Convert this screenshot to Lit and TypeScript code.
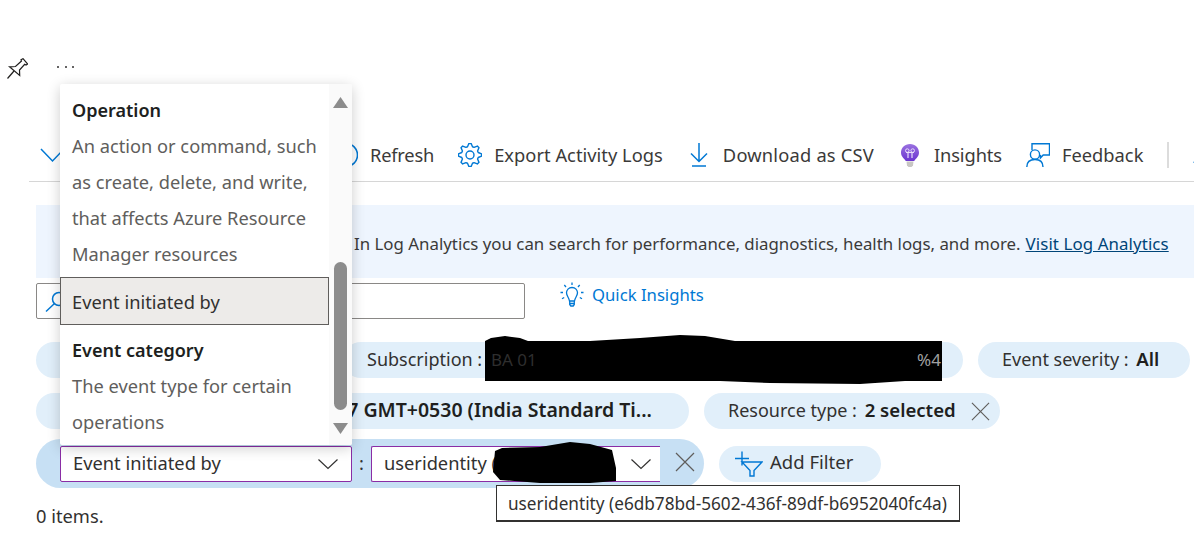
import { LitElement, html, css, svg } from "lit";
import { customElement } from "lit/decorators.js";

function gearPath(cx: number, cy: number, ro: number, ri: number, teeth: number) {
  const pts: string[] = [];
  const n = teeth * 4;
  for (let i = 0; i < n; i++) {
    const phase = i % 4;
    const r = phase === 0 || phase === 1 ? ro : ri;
    const a = ((i + 0.5) / n) * Math.PI * 2 - Math.PI / 2 - (Math.PI * 2) / n;
    pts.push(`${(cx + r * Math.cos(a)).toFixed(2)} ${(cy + r * Math.sin(a)).toFixed(2)}`);
  }
  return "M" + pts.join("L") + "Z";
}

const X = (size: number) => html`<svg width=${size} height=${size} viewBox="0 0 20 20" fill="none" stroke="#605e5c" stroke-width="1.2" style="flex:none;display:block"><path d="M1 1L19 19M19 1L1 19"/></svg>`;
const CHEV = html`<svg width="22" height="12" viewBox="0 0 22 12" fill="none" stroke="#323130" stroke-width="1.2" style="flex:none"><path d="M1.5 1.5L11 10.5L20.5 1.5"/></svg>`;

@customElement("app-root")
export class AppRoot extends LitElement {
  static styles = css`
    :host { display: block; width: 1194px; height: 533px; font-family: "Noto Sans", "Open Sans", sans-serif; color: #323130; background: #fff; font-size: 18.3px; }
    * { box-sizing: border-box; }
    .page { position: relative; width: 1194px; height: 533px; overflow: hidden; }
    .head { display: flex; align-items: center; height: 24px; padding: 56px 0 0 7px; box-sizing: content-box; gap: 29px; }
    .dots { display: flex; gap: 5.7px; margin-top: -3px; }
    .dots i { width: 2px; height: 2px; background: #323130; border-radius: 50%; }
    .toolbar { display: flex; align-items: center; margin: 50px 0 0 29px; padding: 0 0 2px 11px; height: 52px; border-bottom: 1px solid #d6d6d6; gap: 24px; white-space: nowrap; overflow: hidden; }
    .tool { display: flex; align-items: center; gap: 12px; color: #3b3a39; }
    .tool svg { flex: none; display: block; }
    .chev { margin-right: 246px; }
    .t-refresh { letter-spacing: -.2px; }
    .t-export { letter-spacing: .03px; }
    .t-csv { letter-spacing: .2px; }
    .t-ins { letter-spacing: -.1px; }
    .sep { width: 2px; height: 26px; background: #dcdcdc; flex: none; }
    .banner { display: flex; align-items: center; margin: 23px 0 0 36px; height: 73px; padding: 4px 0 0 318px; background: #eef5fe; color: #3b3a39; white-space: nowrap; font-size: 16.85px; }
    .banner a { color: #004578; text-decoration: underline; margin-left: 5px; letter-spacing: .1px; }
    .search-row { display: flex; align-items: flex-start; gap: 35px; margin: 5px 0 0 36px; }
    .search { width: 489px; height: 36px; border: 1px solid #8a8886; border-radius: 2px; padding: 7px 0 0 8px; background: #fff; }
    .qi { display: flex; align-items: center; gap: 8px; color: #0078d4; height: 24px; font-size: 16.7px; }
    .qi span { margin-top: -2px; }
    .row { display: flex; gap: 15px; margin: 15px 0 0 36px; white-space: nowrap; align-items: center; }
    .row.first { margin-top: 23px; }
    .pill { display: flex; align-items: center; height: 36px; border-radius: 18px; background: #e1effa; padding: 0 24px; flex: none; color: #323130; gap: 15px; font-size: 18px; }
    .pill > span { margin-top: -3px; }
    .pill b { font-weight: 600; color: #201f1e; font-size: 18.6px; margin-left: 3px; }
    .w1 { width: 292px; }
    .w2 { width: 620px; }
    .w3 { width: 212px; }
    .w4 { width: 653px; justify-content: flex-end; padding-right: 37px; }
    .w4 b { font-size: 19.5px; margin-left: 0; }
    .res { padding-right: 10px; }
    .edit { height: 49px; width: 668px; border-radius: 25px; background: #c7e0f4; padding: 0 9px 0 24px; gap: 0; justify-content: flex-start; font-size: 18.3px; }
    .row.third { margin-top: 10px; }
    .sel { display: flex; align-items: center; justify-content: space-between; height: 36px; border: 1px solid #8a2da5; background: #fff; border-radius: 2px; padding: 0 12px; flex: none; }
    .sel > span { margin-top: -3px; }
    .sel.a { width: 292px; }
    .sel.b { width: 289px; border-right: 0; border-radius: 2px 0 0 2px; padding-right: 8px; }
    .colon { width: 19px; text-align: center; flex: none; }
    .sel-x { margin-left: 15px; display: block; flex: none; }
    .add { width: 162px; padding: 0 0 0 16px; gap: 7px; font-size: 18.5px; }
    .add > span { margin-top: -5px; }
    .count { margin: 15px 0 0 36px; line-height: 26px; color: #323130; }
    .menu { position: absolute; left: 60px; top: 84px; width: 292px; height: 361px; background: #fff; border-radius: 2px; box-shadow: 0 3px 14px rgba(0,0,0,.2); display: flex; padding-top: 8px; overflow: hidden; font-size: 18.25px; }
    .list { width: 269px; flex: none; }
    .opt { padding: 0 8px 0 12px; line-height: 36px; }
    .opt b { display: block; font-weight: 600; color: #201f1e; font-size: 18.05px; }
    .opt span { display: block; color: #605e5c; }
    .opt.sel-opt { height: 48px; margin: 5px 0 7px; padding: 0 11px; border: 1px solid #605e5c; background: #edebe9; line-height: 48px; color: #323130; font-size: 18.3px; }
    .track { position: absolute; right: 0; top: 0; bottom: 0; width: 23px; background: #fafafa; }
    .thumb { position: absolute; left: 5px; top: 178px; width: 13px; height: 148px; background: #8c8c8c; border-radius: 7px; }
    .arrow { position: absolute; left: 4px; width: 15px; height: 11px; display: block; }
    .up { top: 13px; }
    .down { top: 339px; }
    .blob { position: absolute; left: 0; top: 0; pointer-events: none; font-size: 17px; }
    .tip { position: absolute; left: 496px; top: 485px; width: 464px; height: 37px; background: #fff; border: 1px solid #323130; border-bottom-width: 2px; font-size: 17.2px; display: flex; align-items: center; padding-left: 11px; white-space: nowrap; color: #323130; }
  `;

  render() {
    return html`<div class="page">
      <div class="head">
        <svg width="21" height="21" viewBox="0 0 21 21" fill="#fff" stroke="#201f1e" stroke-width="1.2"><path d="M16 .7L20.7 6L19 7L17.7 6.3L12.5 12L12.7 17.5L2.5 8.8L8.5 8.5L14.5 3L14 1.8Z"/><path d="M7 13L.5 20.5" fill="none"/></svg>
        <div class="dots"><i></i><i></i><i></i></div>
      </div>

      <div class="toolbar">
        <span class="tool chev"><svg width="24" height="24" viewBox="0 0 24 24" fill="none" stroke="#0078d4" stroke-width="1.5"><path d="M1 6L12.5 18L24 6"/></svg></span>
        <span class="tool t-refresh"><svg width="24" height="26" viewBox="0 0 24 26" fill="none" stroke="#0078d4" stroke-width="1.6"><circle cx="12" cy="13" r="11.5"/></svg>Refresh</span>
        <span class="tool t-export"><svg width="24" height="24" viewBox="0 0 24 24" fill="none" stroke="#0078d4" stroke-width="1.4" stroke-linejoin="round"><path d=${gearPath(12, 12, 11.6, 8.6, 8)}/><circle cx="12" cy="12" r="4"/></svg>Export Activity Logs</span>
        <span class="tool t-csv"><svg width="24" height="24" viewBox="0 0 24 24" fill="none" stroke="#0078d4" stroke-width="1.5"><path d="M12 0V18M4 10.5L12 18.5L20 10.5M5 23H19"/></svg>Download as CSV</span>
        <span class="tool t-ins"><svg width="24" height="24" viewBox="0 0 24 24"><defs><linearGradient id="bulb" x1="0" y1="0" x2="0" y2="1"><stop offset="0" stop-color="#9a72e0"/><stop offset="1" stop-color="#6b34d0"/></linearGradient></defs><path d="M12 1C6.8 1 3 5 3 9.6C3 13.6 6 15.5 7.8 18H16.2C18 15.5 21 13.6 21 9.6C21 5 17.2 1 12 1Z" fill="url(#bulb)"/><path d="M8.5 18.5H15.5L15 22.5L13.5 24H10.5L9 22.5Z" fill="#c8c6c4"/><path d="M10 9.5V15M14 9.5V15M8 9.5H16" stroke="#e8dcfa" stroke-width="1.2" fill="none"/><circle cx="9.3" cy="7.6" r="1.8" fill="none" stroke="#e8dcfa"/><circle cx="14.7" cy="7.6" r="1.8" fill="none" stroke="#e8dcfa"/></svg>Insights</span>
        <span class="tool"><svg width="24" height="24" viewBox="0 0 24 24" fill="none" stroke="#0078d4" stroke-width="1.4"><path d="M6 7V.8H23.5V12H17.2L14.5 15V12"/><circle cx="9" cy="11.5" r="4.6"/><path d="M.8 24C.8 19 4 16.5 9 16.5S17 19 17 24"/></svg>Feedback</span>
        <span class="sep"></span>
        <svg width="24" height="24" viewBox="0 0 24 24" fill="none" stroke="#0078d4" stroke-width="1.5" style="flex:none"><path d="M1 20L6 8"/></svg>
      </div>

      <div class="banner">In Log Analytics you can search for performance, diagnostics, health logs, and more.<a href="#">Visit Log Analytics</a></div>

      <div class="search-row">
        <div class="search"><svg width="26" height="22" viewBox="0 0 26 22" fill="none" stroke="#0078d4" stroke-width="1.5"><circle cx="14" cy="8" r="6.5"/><path d="M9.5 12.5L1 20.5"/></svg></div>
        <div class="qi"><svg width="24" height="26" viewBox="0 0 24 26" fill="none" stroke="#0078d4" stroke-width="1.3"><path d="M12 5.5C8.6 5.5 6.5 8 6.5 10.8C6.5 13.8 8.8 15.2 9.5 19H14.5C15.2 15.2 17.5 13.8 17.5 10.8C17.5 8 15.4 5.5 12 5.5Z"/><path d="M9.7 19V22.5L10.8 24H13.2L14.3 22.5V19M9.7 21.5H14.3"/><path d="M12 .5V3M4.3 3L6 5M19.7 3L18 5M.5 10.5H3M21 10.5H23.5M2 16.8L4.2 15.5M22 16.8L19.8 15.5"/></svg><span>Quick Insights</span></div>
      </div>

      <div class="row first">
        <div class="pill w1"></div>
        <div class="pill w2"><span>Subscription :</span></div>
        <div class="pill w3"><span>Event severity : <b>All</b></span></div>
      </div>
      <div class="row">
        <div class="pill w4"><span><b>7 GMT+0530 (India Standard Ti...</b></span></div>
        <div class="pill res"><span>Resource type : <b>2 selected</b></span>${X(19)}</div>
      </div>
      <div class="row third">
        <div class="pill edit">
          <div class="sel a"><span>Event initiated by</span> ${CHEV}</div>
          <span class="colon">:</span>
          <div class="sel b"><span>useridentity (e</span> ${CHEV}</div>
          <span class="sel-x">${X(20)}</span>
        </div>
        <div class="pill add"><svg width="28" height="26" viewBox="0 0 28 26" fill="none" stroke="#0078d4" stroke-width="1.4"><path d="M0 7.5H14M7 .5V14.5M7 11H27L19 19.5V25H15V19.5Z"/></svg><span>Add Filter</span></div>
      </div>
      <div class="count">0 items.</div>

      <div class="menu">
        <div class="list">
          <div class="opt"><b>Operation</b><span>An action or command, such as create, delete, and write, that affects Azure Resource Manager resources</span></div>
          <div class="opt sel-opt">Event initiated by</div>
          <div class="opt"><b>Event category</b><span>The event type for certain operations</span></div>
        </div>
        <div class="track">
          <svg class="arrow up" viewBox="0 0 15 11" fill="#8c8c8c"><path d="M7.5 0L15 11H0Z"/></svg>
          <div class="thumb"></div>
          <svg class="arrow down" viewBox="0 0 15 11" fill="#8c8c8c"><path d="M0 0H15L7.5 11Z"/></svg>
        </div>
      </div>

      <svg class="blob" width="1194" height="533" viewBox="0 0 1194 533" fill="#000">
        ${svg`<path d="M485 341L491 338L505 336L520 338L528 341H590L640 338L680 335L705 336L735 341H942V381H905L860 384L770 383L720 381H485Z"/>
        <path d="M495 451L502 448L540 447L570 442L590 444L612 450L616 468L616 481L590 483L540 483L500 480L493 472Z"/>
        <text x="491" y="366" fill="#2e2e2e">BA 01</text>
        <text x="917" y="366" fill="#a0a0a0">%4</text>`}
      </svg>

      <div class="tip">useridentity (e6db78bd-5602-436f-89df-b6952040fc4a)</div>
    </div>`;
  }
}
